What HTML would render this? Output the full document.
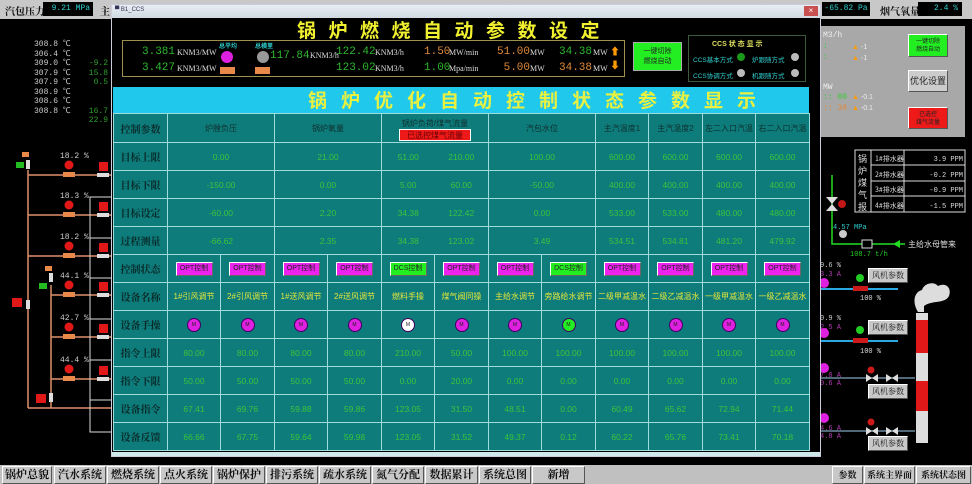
<!DOCTYPE html>
<html><head><meta charset="utf-8"><style>
*{margin:0;padding:0;box-sizing:border-box}
body{width:972px;height:484px;background:#000;position:relative;overflow:hidden;font-family:"Liberation Sans","Noto Sans CJK SC",sans-serif;}
.a{position:absolute}
.mono{font-family:"Liberation Mono","Noto Sans CJK SC",monospace}
.serif{font-family:"Liberation Serif","Noto Serif CJK SC",serif}
.btn{position:absolute;background:#c8c8c8;border:1px solid #fff;border-right-color:#555;border-bottom-color:#555;font-size:11px;font-weight:bold;color:#111;text-align:center;line-height:16px;font-family:"Liberation Serif","Noto Serif CJK SC",serif}
table{border-collapse:collapse;table-layout:fixed;position:absolute;left:113px;top:113px;width:696px}
td{border:1px solid #9fdcdc;background:#0d7c7a;text-align:center;font-size:8.5px;color:#3cc43c;height:28px;padding:0;overflow:hidden;white-space:nowrap}
td.l{color:#0a2a2a;font-weight:bold;font-size:10px;font-family:"Liberation Serif","Noto Serif CJK SC",serif}
td.h{color:#103030;font-size:8px}
td.n{color:#e6e63c;font-size:8px}
.opt{display:inline-block;width:37px;height:14px;background:#ee22ee;border:1px solid #fff;border-right-color:#666;border-bottom-color:#666;color:#222;font-size:7px;line-height:12px}
.dcs{background:#22ee22}
.m{display:inline-block;width:14px;height:14px;border-radius:50%;background:#e020e0;border:1px solid #400060;font-size:5px;line-height:12px;color:#222}
</style></head><body>

<!-- top bar -->
<div class="a" style="left:0;top:0;width:972px;height:19px;background:#c8c8c8"></div>
<div class="a serif" style="left:5px;top:3px;font-size:10px;font-weight:bold;color:#111">汽包压力</div>
<div class="a mono" style="left:43px;top:2px;width:50px;height:14px;background:#000;color:#2fd0d0;font-size:8px;text-align:right;padding-right:3px;line-height:14px">9.21 MPa</div>
<div class="a serif" style="left:100px;top:3px;font-size:10px;font-weight:bold;color:#111">主</div>
<div class="a mono" style="left:822px;top:2px;width:48px;height:14px;background:#000;color:#2fd0d0;font-size:8px;text-align:center;line-height:14px">-65.82 Pa</div>
<div class="a serif" style="left:880px;top:3px;font-size:10px;font-weight:bold;color:#111">烟气氧量</div>
<div class="a mono" style="left:918px;top:2px;width:44px;height:14px;background:#000;color:#2fd0d0;font-size:8px;text-align:right;padding-right:4px;line-height:14px">2.4 %</div>

<!-- left panel -->
<div class="a mono" style="left:34px;top:40px;font-size:8px;line-height:9.5px;color:#ccc">308.8 ℃<br>306.4 ℃<br>309.0 ℃<br>307.9 ℃<br>307.9 ℃<br>308.9 ℃<br>308.6 ℃<br>308.8 ℃</div>
<div class="a mono" style="left:88px;top:59px;font-size:8px;line-height:9.5px;color:#2ca02c;text-align:right;width:20px">-9.2<br>15.8<br>0.5<br><br><br>16.7<br>22.9</div>
<svg class="a" style="left:0;top:140px" width="113" height="300">
<g stroke="#e0906a" stroke-width="1.5" fill="none">
<line x1="28" y1="30" x2="28" y2="268"/><line x1="51" y1="145" x2="51" y2="268"/><line x1="28" y1="268" x2="113" y2="268"/>
<line x1="28" y1="35" x2="113" y2="35"/><line x1="28" y1="75" x2="113" y2="75"/><line x1="28" y1="116" x2="113" y2="116"/>
<line x1="51" y1="155" x2="113" y2="155"/><line x1="51" y1="197" x2="113" y2="197"/><line x1="51" y1="239" x2="113" y2="239"/>
</g>
<g stroke="#ddd" fill="none"><polyline points="113,57 90,57 90,292 113,292"/><line x1="90" y1="98" x2="113" y2="98"/><line x1="90" y1="138" x2="113" y2="138"/><line x1="90" y1="179" x2="113" y2="179"/><line x1="90" y1="220" x2="113" y2="220"/><line x1="90" y1="260" x2="113" y2="260"/></g>
<g font-size="8" fill="#ccc" font-family="Liberation Mono">
<text x="60" y="18">18.2 %</text><text x="60" y="58">18.3 %</text><text x="60" y="99">18.2 %</text><text x="60" y="138">44.1 %</text><text x="60" y="180">42.7 %</text><text x="60" y="222">44.4 %</text></g>
<g fill="#e01818">
<circle cx="69" cy="25" r="4.5"/><circle cx="69" cy="65" r="4.5"/><circle cx="69" cy="106" r="4.5"/><circle cx="69" cy="145" r="4.5"/><circle cx="69" cy="187" r="4.5"/><circle cx="69" cy="229" r="4.5"/>
<rect x="99" y="22" width="9" height="9"/><rect x="99" y="62" width="9" height="9"/><rect x="99" y="103" width="9" height="9"/><rect x="99" y="142" width="9" height="9"/><rect x="99" y="184" width="9" height="9"/><rect x="99" y="226" width="9" height="9"/>
<rect x="12" y="158" width="10" height="9"/><rect x="36" y="254" width="10" height="9"/></g>
<g fill="#e8894a"><rect x="63" y="32" width="12" height="5"/><rect x="63" y="72" width="12" height="5"/><rect x="63" y="113" width="12" height="5"/><rect x="63" y="152" width="12" height="5"/><rect x="63" y="194" width="12" height="5"/><rect x="63" y="236" width="12" height="5"/><rect x="22" y="12" width="7" height="5"/><rect x="45" y="126" width="7" height="5"/></g>
<g fill="#ddd"><rect x="97" y="33" width="12" height="4"/><rect x="97" y="73" width="12" height="4"/><rect x="97" y="114" width="12" height="4"/><rect x="97" y="153" width="12" height="4"/><rect x="97" y="195" width="12" height="4"/><rect x="97" y="237" width="12" height="4"/>
<rect x="26" y="20" width="4" height="9"/><rect x="49" y="133" width="4" height="9"/><rect x="26" y="160" width="4" height="9"/><rect x="49" y="253" width="4" height="9"/></g>
<g fill="#22bb22"><rect x="16" y="22" width="8" height="6"/><rect x="39" y="143" width="8" height="6"/></g>
</svg>

<!-- right panel -->
<div class="a" style="left:820px;top:26px;width:145px;height:111px;background:#a8a8a8"></div>
<div class="a mono" style="left:823px;top:31px;font-size:8px;color:#eee">M3/h</div>
<div class="a mono" style="left:823px;top:83px;font-size:8px;color:#eee">MW</div>
<div class="a mono" style="left:823px;top:41px;font-size:8px;color:#3c3;line-height:11px">:<br>:</div>
<div class="a" style="left:852px;top:42px;font-size:7px;color:#f90;line-height:11px">▲ <span style="color:#eee">-1</span><br>▲ <span style="color:#eee">-1</span></div>
<div class="a" style="left:852px;top:92px;font-size:7px;color:#f90;line-height:11px">▲ <span style="color:#eee">-0.1</span><br>▲ <span style="color:#eee">-0.1</span></div>
<div class="a mono" style="left:823px;top:92px;font-size:8px;color:#3c3;line-height:11px">:: 00<br><span style="color:#e08a3a">:: 38</span></div>
<div class="a" style="left:908px;top:34px;width:40px;height:23px;background:#22ee22;border:1px solid #fff;border-right-color:#555;border-bottom-color:#555;font-size:6px;line-height:8px;text-align:center;padding-top:3px;color:#222">一键切除<br>燃烧自动</div>
<div class="a" style="left:908px;top:70px;width:40px;height:22px;background:#ccc;border:1px solid #fff;border-right-color:#555;border-bottom-color:#555;font-size:9px;line-height:20px;text-align:center;color:#222">优化设置</div>
<div class="a" style="left:908px;top:107px;width:40px;height:22px;background:#ee1a1a;border:1px solid #fff;border-right-color:#555;border-bottom-color:#555;font-size:6px;line-height:8px;text-align:center;padding-top:3px;color:#222">已选控<br>煤气流量</div>

<svg class="a" style="left:820px;top:140px" width="152" height="320">
<g stroke="#ddd" fill="none"><rect x="35" y="10" width="110" height="62"/><line x1="51" y1="10" x2="51" y2="72"/><line x1="84" y1="10" x2="84" y2="72"/><line x1="51" y1="25" x2="145" y2="25"/><line x1="51" y1="41" x2="145" y2="41"/><line x1="51" y1="56" x2="145" y2="56"/></g>
<g font-size="9" fill="#ddd" font-family="Noto Sans CJK SC"><text x="38" y="22">锅</text><text x="38" y="34">炉</text><text x="38" y="46">煤</text><text x="38" y="58">气</text><text x="38" y="70">报</text>
<g font-size="7"><text x="55" y="21">1#排水器</text><text x="55" y="37">2#排水器</text><text x="55" y="52">3#排水器</text><text x="55" y="68">4#排水器</text></g>
<g font-size="7" font-family="Liberation Mono" text-anchor="end"><text x="143" y="21">3.9 PPM</text><text x="143" y="37">-0.2 PPM</text><text x="143" y="52">-0.9 PPM</text><text x="143" y="68">-1.5 PPM</text></g>
<text x="88" y="107" font-size="8">主给水母管来</text></g>
<g stroke="#22dd22" stroke-width="1.5" fill="none"><polyline points="12,35 12,104 85,104"/></g>
<polygon points="73,104 80,100 80,108" fill="#22dd22"/>
<rect x="42" y="100" width="10" height="8" fill="#000" stroke="#ddd"/>
<polygon points="6,57 18,57 12,64" fill="#ddd"/><polygon points="6,71 18,71 12,64" fill="#ddd"/><circle cx="22" cy="64" r="4" fill="#c01818"/>
<circle cx="23" cy="94" r="4" fill="#ccc"/>
<g font-size="7" font-family="Liberation Mono"><text x="13" y="89" fill="#2fd0d0">4.57 MPa</text><text x="30" y="116" fill="#2c2">108.7 t/h</text>
<text x="0" y="127" fill="#ccc">9.6 %</text><text x="0" y="136" fill="#b03bb0">3.3 A</text><text x="0" y="180" fill="#ccc">0.9 %</text><text x="0" y="189" fill="#b03bb0">2.5 A</text>
<text x="0" y="237" fill="#b03bb0">7.0 A</text><text x="0" y="245" fill="#b03bb0">0.6 A</text><text x="0" y="290" fill="#b03bb0">4.6 A</text><text x="0" y="298" fill="#b03bb0">4.8 A</text>
<text x="40" y="160" fill="#ddd">100 %</text><text x="40" y="213" fill="#ddd">100 %</text></g>
<g fill="#e020e0"><circle cx="4" cy="143" r="5"/><circle cx="4" cy="193" r="5"/><circle cx="4" cy="228" r="5"/><circle cx="4" cy="278" r="5"/></g>
<g stroke="#2aa8e0" stroke-width="2"><line x1="0" y1="149" x2="78" y2="149"/><line x1="0" y1="201" x2="78" y2="201"/></g>
<g stroke="#6a8aa0" stroke-width="1.5"><line x1="0" y1="238" x2="95" y2="238"/><line x1="0" y1="291" x2="95" y2="291"/></g>
<g fill="#22cc22"><circle cx="40" cy="138" r="4"/><circle cx="40" cy="190" r="4"/></g>
<g fill="#cc1a1a"><rect x="33" y="146" width="15" height="5"/><rect x="33" y="198" width="15" height="5"/><circle cx="51" cy="230" r="3.5"/><circle cx="51" cy="282" r="3.5"/></g>
<g fill="#ddd"><polygon points="46,234 52,238 46,242"/><polygon points="58,234 52,238 58,242"/><polygon points="66,234 72,238 66,242"/><polygon points="78,234 72,238 78,242"/>
<polygon points="46,287 52,291 46,295"/><polygon points="58,287 52,291 58,295"/><polygon points="66,287 72,291 66,295"/><polygon points="78,287 72,291 78,295"/></g>
<path d="M98,172 C92,162 94,152 102,150 C104,143 114,141 118,146 C126,142 132,148 129,156 C125,164 112,160 104,166 L104,172 Z" fill="#ddd"/>
<rect x="96" y="173" width="12" height="130" fill="#ddd"/>
<rect x="96" y="180" width="12" height="33" fill="#e01818"/><rect x="96" y="241" width="12" height="30" fill="#e01818"/>
</svg>
<div class="btn" style="left:868px;top:268px;width:40px;height:15px;font-size:8px;line-height:13px;font-weight:normal">风机参数</div>
<div class="btn" style="left:868px;top:320px;width:40px;height:15px;font-size:8px;line-height:13px;font-weight:normal">风机参数</div>
<div class="btn" style="left:868px;top:384px;width:40px;height:15px;font-size:8px;line-height:13px;font-weight:normal">风机参数</div>
<div class="btn" style="left:868px;top:436px;width:40px;height:15px;font-size:8px;line-height:13px;font-weight:normal">风机参数</div>

<!-- window -->
<div class="a" style="left:111px;top:4px;width:710px;height:453px;background:#000;border:1px solid #ccd"></div>
<div class="a" style="left:112px;top:5px;width:708px;height:13px;background:linear-gradient(#e8eef4,#d0d8e0)"></div>
<div class="a" style="left:115px;top:7px;font-size:6px;color:#335">▀ B1_CCS</div>
<div class="a" style="left:804px;top:6px;width:14px;height:10px;background:#c85050;color:#fff;font-size:8px;line-height:10px;text-align:center">×</div>
<div class="a" style="left:112px;top:452px;width:708px;height:4px;background:#cfe8ec"></div>

<div class="a" style="left:297px;top:19px;font-size:19px;font-weight:bold;color:#f0f030;letter-spacing:12.5px;font-family:'Noto Sans CJK SC',sans-serif;line-height:22px">锅炉燃烧自动参数设定</div>
<div class="a" style="left:122px;top:40px;width:503px;height:37px;border:1px solid #a09050"></div>
<div class="a mono" style="left:142px;top:44px;font-size:11px;color:#2fb82f;line-height:16px">3.381<br>3.427</div>
<div class="a serif" style="left:177px;top:45px;font-size:8px;color:#ddd;line-height:16px">KNM3/MW<br>KNM3/MW</div>
<div class="a" style="left:219px;top:41px;font-size:6px;color:#2fd0d0;font-weight:bold">总平均</div>
<div class="a" style="left:255px;top:41px;font-size:6px;color:#2fd0d0;font-weight:bold">总横里</div>
<div class="a" style="left:221px;top:51px;width:12px;height:12px;border-radius:50%;background:#e020e0"></div>
<div class="a" style="left:257px;top:51px;width:12px;height:12px;border-radius:50%;background:#999"></div>
<div class="a" style="left:220px;top:67px;width:15px;height:7px;background:#e8894a"></div>
<div class="a" style="left:255px;top:67px;width:15px;height:7px;background:#e8894a"></div>
<div class="a mono" style="left:270px;top:50px;font-size:11px;color:#2fb82f">117.84</div>
<div class="a serif" style="left:310px;top:51px;font-size:8px;color:#ddd">KNM3/h</div>
<div class="a mono" style="left:336px;top:44px;font-size:11px;color:#2fb82f;line-height:16px">122.42<br>123.02</div>
<div class="a serif" style="left:375px;top:45px;font-size:8px;color:#ddd;line-height:16px">KNM3/h<br>KNM3/h</div>
<div class="a mono" style="left:424px;top:44px;font-size:11px;line-height:16px"><span style="color:#e08a3a">1.50</span><br><span style="color:#2fb82f">1.00</span></div>
<div class="a serif" style="left:449px;top:45px;font-size:8px;color:#ddd;line-height:16px">MW/min<br>Mpa/min</div>
<div class="a mono" style="left:497px;top:44px;font-size:11px;color:#e08a3a;line-height:16px">51.00<br>&nbsp;5.00</div>
<div class="a serif" style="left:530px;top:45px;font-size:8px;color:#ddd;line-height:16px">MW<br>MW</div>
<div class="a mono" style="left:559px;top:44px;font-size:11px;line-height:16px"><span style="color:#2fb82f">34.38</span><br><span style="color:#e08a3a">34.38</span></div>
<div class="a serif" style="left:593px;top:45px;font-size:8px;color:#ddd;line-height:16px">MW<br>MW</div>
<div class="a" style="left:610px;top:46px;font-size:10px;color:#f90;line-height:14px">⬆<br>⬇</div>
<div class="a" style="left:633px;top:42px;width:49px;height:29px;background:#22ee22;border:1px solid #aaa;font-size:7px;line-height:10px;text-align:center;padding-top:4px;color:#222">一键切除<br>燃烧自动</div>
<div class="a" style="left:688px;top:35px;width:118px;height:47px;border:1px solid #3a5a3a"></div>
<div class="a" style="left:712px;top:39px;font-size:7px;font-weight:bold;color:#e0e060">CCS 状 态 显 示</div>
<div class="a" style="left:693px;top:53px;font-size:6.5px;color:#2fd0d0;line-height:16px">CCS基本方式<br>CCS协调方式</div>
<div class="a" style="left:752px;top:53px;font-size:6.5px;color:#2fd0d0;line-height:16px">炉跟随方式<br>机跟随方式</div>
<div class="a" style="left:737px;top:53px;width:8px;height:8px;border-radius:50%;background:#1a9a1a"></div>
<div class="a" style="left:737px;top:69px;width:8px;height:8px;border-radius:50%;background:#bbb"></div>
<div class="a" style="left:791px;top:53px;width:8px;height:8px;border-radius:50%;background:#bbb"></div>
<div class="a" style="left:791px;top:69px;width:8px;height:8px;border-radius:50%;background:#bbb"></div>

<div class="a" style="left:113px;top:87px;width:696px;height:26px;background:#20c8ec"></div>
<div class="a" style="left:308px;top:88px;font-size:19px;font-weight:bold;color:#e8f040;letter-spacing:14px;font-family:'Noto Sans CJK SC',sans-serif;line-height:24px;white-space:nowrap">锅炉优化自动控制状态参数显示</div>

<table>
<colgroup><col style="width:54px"><col style="width:53px"><col style="width:54px"><col style="width:53px"><col style="width:54px"><col style="width:53px"><col style="width:54px"><col style="width:53px"><col style="width:54px"><col style="width:53px"><col style="width:54px"><col style="width:53px"><col style="width:54px"></colgroup>
<tr><td class="l" style="height:29px">控制参数</td><td class="h" colspan="2">炉膛负压</td><td class="h" colspan="2">锅炉氧量</td><td class="h" colspan="2" style="vertical-align:top;padding-top:4px;position:relative">锅炉负荷/煤气流量<br><span style="display:inline-block;background:#ee1a1a;color:#600;width:72px;height:12px;font-size:8px;line-height:12px;border:1px solid #fff">已选控煤气流量</span></td><td class="h" colspan="2">汽包水位</td><td class="h">主汽温度1</td><td class="h">主汽温度2</td><td class="h">左二入口汽温</td><td class="h">右二入口汽温</td></tr>
<tr><td class="l">目标上限</td><td colspan="2">0.00</td><td colspan="2">21.00</td><td style="border-right:none">51.00</td><td style="border-left:none">210.00</td><td colspan="2">100.00</td><td>600.00</td><td>600.00</td><td>600.00</td><td>600.00</td></tr>
<tr><td class="l">目标下限</td><td colspan="2">-150.00</td><td colspan="2">0.00</td><td style="border-right:none">5.00</td><td style="border-left:none">60.00</td><td colspan="2">-50.00</td><td>400.00</td><td>400.00</td><td>400.00</td><td>400.00</td></tr>
<tr><td class="l">目标设定</td><td colspan="2">-60.00</td><td colspan="2">2.20</td><td style="border-right:none">34.38</td><td style="border-left:none">122.42</td><td colspan="2">0.00</td><td>533.00</td><td>533.00</td><td>480.00</td><td>480.00</td></tr>
<tr><td class="l">过程测量</td><td colspan="2">-66.62</td><td colspan="2">2.35</td><td style="border-right:none">34.38</td><td style="border-left:none">123.02</td><td colspan="2">3.49</td><td>534.51</td><td>534.81</td><td>481.20</td><td>479.92</td></tr>
<tr><td class="l">控制状态</td><td><span class="opt">OPT控制</span></td><td><span class="opt">OPT控制</span></td><td><span class="opt">OPT控制</span></td><td><span class="opt">OPT控制</span></td><td><span class="opt dcs">DCS控制</span></td><td><span class="opt">OPT控制</span></td><td><span class="opt">OPT控制</span></td><td><span class="opt dcs">DCS控制</span></td><td><span class="opt">OPT控制</span></td><td><span class="opt">OPT控制</span></td><td><span class="opt">OPT控制</span></td><td><span class="opt">OPT控制</span></td></tr>
<tr><td class="l">设备名称</td><td class="n">1#引风调节</td><td class="n">2#引风调节</td><td class="n">1#送风调节</td><td class="n">2#送风调节</td><td class="n">燃料手操</td><td class="n">煤气阀同操</td><td class="n">主给水调节</td><td class="n">旁路给水调节</td><td class="n">二级甲减温水</td><td class="n">二级乙减温水</td><td class="n">一级甲减温水</td><td class="n">一级乙减温水</td></tr>
<tr><td class="l">设备手操</td><td><span class="m">M</span></td><td><span class="m">M</span></td><td><span class="m">M</span></td><td><span class="m">M</span></td><td><span class="m" style="background:#fff">M</span></td><td><span class="m">M</span></td><td><span class="m">M</span></td><td><span class="m" style="background:#22ee22">M</span></td><td><span class="m">M</span></td><td><span class="m">M</span></td><td><span class="m">M</span></td><td><span class="m">M</span></td></tr>
<tr><td class="l">指令上限</td><td>80.00</td><td>80.00</td><td>80.00</td><td>80.00</td><td>210.00</td><td>50.00</td><td>100.00</td><td>100.00</td><td>100.00</td><td>100.00</td><td>100.00</td><td>100.00</td></tr>
<tr><td class="l">指令下限</td><td>50.00</td><td>50.00</td><td>50.00</td><td>50.00</td><td>0.00</td><td>20.00</td><td>0.00</td><td>0.00</td><td>0.00</td><td>0.00</td><td>0.00</td><td>0.00</td></tr>
<tr><td class="l">设备指令</td><td>67.41</td><td>69.76</td><td>59.88</td><td>59.86</td><td>123.05</td><td>31.50</td><td>48.51</td><td>0.00</td><td>60.49</td><td>65.62</td><td>72.94</td><td>71.44</td></tr>
<tr><td class="l">设备反馈</td><td>66.66</td><td>67.75</td><td>59.64</td><td>59.98</td><td>123.05</td><td>31.52</td><td>49.37</td><td>0.12</td><td>60.22</td><td>65.76</td><td>73.41</td><td>70.18</td></tr>
</table>

<!-- bottom nav -->
<div class="a" style="left:0;top:465px;width:972px;height:19px;background:#c0c0c0"></div>
<div class="btn" style="left:2px;top:466px;width:50px;height:18px">锅炉总貌</div>
<div class="btn" style="left:54px;top:466px;width:52px;height:18px">汽水系统</div>
<div class="btn" style="left:107px;top:466px;width:52px;height:18px">燃烧系统</div>
<div class="btn" style="left:160px;top:466px;width:52px;height:18px">点火系统</div>
<div class="btn" style="left:213px;top:466px;width:52px;height:18px">锅炉保护</div>
<div class="btn" style="left:266px;top:466px;width:52px;height:18px">排污系统</div>
<div class="btn" style="left:319px;top:466px;width:52px;height:18px">疏水系统</div>
<div class="btn" style="left:372px;top:466px;width:52px;height:18px">氮气分配</div>
<div class="btn" style="left:425px;top:466px;width:53px;height:18px">数据累计</div>
<div class="btn" style="left:479px;top:466px;width:52px;height:18px">系统总图</div>
<div class="btn" style="left:532px;top:466px;width:53px;height:18px">新增</div>
<div class="btn" style="left:832px;top:466px;width:31px;height:18px;font-size:9px">参数</div>
<div class="btn" style="left:864px;top:466px;width:51px;height:18px;font-size:9px">系统主界面</div>
<div class="btn" style="left:916px;top:466px;width:55px;height:18px;font-size:9px">系统状态图</div>
</body></html>
